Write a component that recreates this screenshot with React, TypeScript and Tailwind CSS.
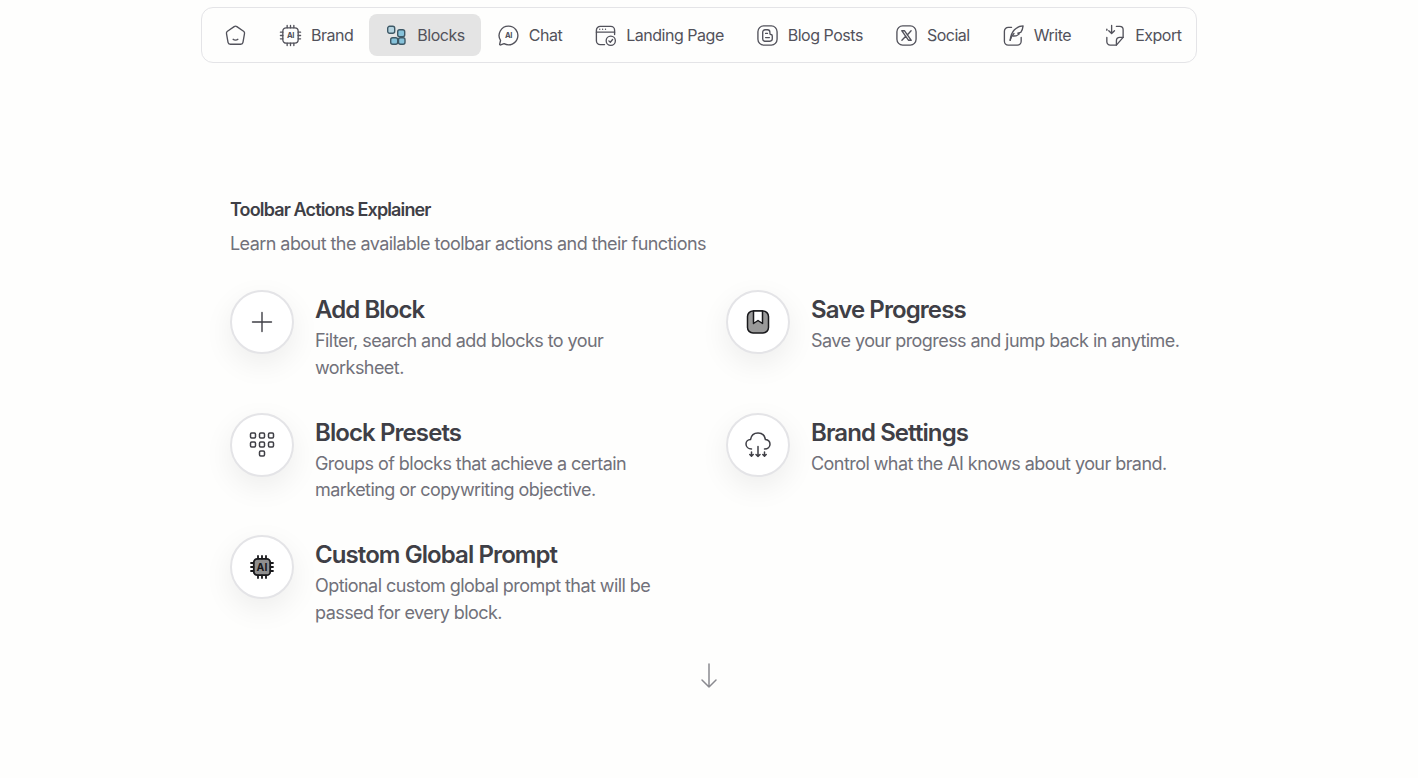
import type { ReactNode } from "react";

const stroke = "#52525b";

const NavSvg = ({ children }: { children: ReactNode }) => (
  <svg width="23" height="23" viewBox="0 0 24 24" fill="none" stroke={stroke} strokeWidth="1.400" strokeLinecap="round" strokeLinejoin="round" className="shrink-0">
    {children}
  </svg>
);

const AiText = ({ x = 12, y = 15, size = 8, fill = stroke }: { x?: number; y?: number; size?: number; fill?: string }) => (
  <text x={x} y={y} textAnchor="middle" fontSize={size} fontWeight="700" fontFamily="Inter, sans-serif" fill={fill} stroke="none">
    AI
  </text>
);

const HomeIcon = () => (
  <NavSvg>
    <path d="M10.600 2.700a2.400 2.400 0 0 1 2.800 0l7 4.900a2.400 2.400 0 0 1 1 2.500l-1.600 9a2.400 2.400 0 0 1-2.400 2H6.600a2.400 2.400 0 0 1-2.400-2L2.600 10.100a2.400 2.400 0 0 1 1-2.500z" />
    <path d="M9.500 16c1.200 1.100 3.800 1.100 5 0" />
  </NavSvg>
);

const ChipIcon = () => (
  <NavSvg>
    <rect x="4" y="4" width="16" height="16" rx="3.500" />
    <path d="M8.500 1.500V4M12 1.500V4M15.500 1.500V4M8.500 20v2.500M12 20v2.500M15.500 20v2.500M1.500 8.500H4M1.500 12H4M1.500 15.500H4M20 8.500h2.500M20 12h2.500M20 15.500h2.500" />
    <AiText x={12} y={15} size={8} />
  </NavSvg>
);

const BlocksIcon = () => (
  <svg width="23" height="23" viewBox="-1.500 -1.500 23 23" fill="#86c2da" stroke="#3d5866" strokeWidth="1.400" className="shrink-0">
    <rect x="1.200" y="0.800" width="7" height="7" rx="2" fill="#b4d3df" />
    <rect x="11.200" y="4.200" width="7" height="7" rx="2" />
    <rect x="4.200" y="12.200" width="7" height="6.500" rx="2" />
    <rect x="12" y="12.200" width="6.500" height="6.500" rx="2" />
  </svg>
);

const ChatIcon = () => (
  <NavSvg>
    <path d="M12 2.300a9.700 9.700 0 1 1-4.600 18.200L3.800 21.900c-.6.200-1.100-.300-1-.8l.9-3.900A9.700 9.700 0 0 1 12 2.300z" />
    <AiText x={12} y={15} size={8} />
  </NavSvg>
);

const LandingIcon = () => (
  <NavSvg>
    <path d="M21.500 11V6.500a4 4 0 0 0-4-4h-11a4 4 0 0 0-4 4v11a4 4 0 0 0 4 4H11" />
    <path d="M2.500 8.500h19" />
    <path d="M6 5.500h.01M9 5.500h.01M12 5.500h.01" />
    <circle cx="17.500" cy="17.500" r="4.800" />
    <path d="M15.500 17.600l1.500 1.400 2.400-2.800" />
  </NavSvg>
);

const BlogIcon = () => (
  <NavSvg>
    <rect x="2" y="2" width="20" height="20" rx="6" />
    <path d="M7 11V8.500A2.500 2.500 0 0 1 9.500 6H12a2.500 2.500 0 0 1 2.500 2.500V10a1 1 0 0 0 1 1 1.500 1.500 0 0 1 1.500 1.500v3a2.500 2.500 0 0 1-2.500 2.500h-5.500A2.500 2.500 0 0 1 7 15.500z" />
    <path d="M10 9.800h2M10 14.200h4" />
  </NavSvg>
);

const SocialIcon = () => (
  <NavSvg>
    <rect x="2" y="2" width="20" height="20" rx="6" />
    <path d="M7 7h2.800l7.200 10h-2.800zM16.800 7l-4 4.400M11.200 12.800L7.200 17" />
  </NavSvg>
);

const WriteIcon = () => (
  <NavSvg>
    <path d="M10 3.500H6.500a4 4 0 0 0-4 4V18a4 4 0 0 0 4 4H16a4 4 0 0 0 4-4v-4" />
    <path d="M8.500 17c.4-3.500 1.500-8 4.500-11 2.200-2.200 5.500-4 9-4-.3 3-1.200 5.500-2.500 6.800l-3 .7 1.500.8c-1.500 1.700-3.700 2.400-6.500 2.200" />
    <path d="M8.500 17c.8-2.800 2-5 4-7" />
  </NavSvg>
);

const ExportIcon = () => (
  <NavSvg>
    <path d="M14 2.500h3.500A3.500 3.500 0 0 1 21 6v8l-7 8H7.500A3.500 3.500 0 0 1 4 18.500V14" />
    <path d="M21 14h-3.500a3.500 3.500 0 0 0-3.500 3.500V22" />
    <path d="M9 1.500v8M6 7l3 3 3-3" />
    <path d="M4 6.500v-1" />
  </NavSvg>
);

const PlusIcon = () => (
  <svg width="24" height="24" viewBox="0 0 24 24" fill="none" stroke="#3f3f46" strokeWidth="1.400" strokeLinecap="round">
    <path d="M12 2.500v19M2.500 12h19" />
  </svg>
);

const KeypadIcon = () => (
  <svg width="26" height="26" viewBox="0 0 26 26" fill="none" stroke="#3f3f46" strokeWidth="1.500">
    {[1.500, 10.500, 19.500].flatMap((x) =>
      [1, 10].map((y) => <rect key={`${x}-${y}`} x={x} y={y} width="5" height="5" rx="1.200" />)
    )}
    <rect x="10.500" y="19" width="5" height="5" rx="1.200" />
  </svg>
);

const FilledChipIcon = () => (
  <svg width="24" height="24" viewBox="0 0 24 24" fill="none" stroke="#18181b" strokeWidth="1.800" strokeLinecap="round">
    <rect x="3.800" y="3.800" width="16.400" height="16.400" rx="3.500" fill="#8f8f8f" />
    <path d="M8 1v2.500M12 1v2.500M16 1v2.500M8 20.500V23M12 20.500V23M16 20.500V23M1 8h2.500M1 12h2.500M1 16h2.500M20.500 8H23M20.500 12H23M20.500 16H23" />
    <AiText x={12} y={15.800} size={10.500} fill="#18181b" />
  </svg>
);

const SaveIcon = () => (
  <svg width="24" height="24" viewBox="0 0 24 24" fill="none" stroke="#18181b" strokeWidth="1.500" strokeLinejoin="round">
    <rect x="1.500" y="1" width="21" height="22" rx="5.500" fill="#999999" />
    <path d="M7.500 1h9v12.500l-4.500-3-4.500 3z" fill="#ffffff" />
  </svg>
);

const CloudIcon = () => (
  <svg width="26" height="26" viewBox="0 0 26 26" fill="none" stroke="#3f3f46" strokeWidth="1.500" strokeLinecap="round" strokeLinejoin="round">
    <path d="M6.500 17C3.300 17 1 14.800 1 12C1 9.500 3 7.700 5.500 7.600C6.200 3.500 9.300 1 13 1C16.700 1 19.700 3.500 20.400 7.500C23 7.800 25 9.700 25 12.200C25 14.800 22.800 17 19.500 17" />
    <path d="M13 14.500V24.500M11 22.500l2 2 2-2" />
    <path d="M6.500 20v4M4.800 22.500l1.700 1.700 1.700-1.700M19.500 20v4M17.800 22.500l1.700 1.700 1.700-1.700" />
  </svg>
);

const navItems = [
  { label: "Brand", icon: <ChipIcon /> },
  { label: "Blocks", icon: <BlocksIcon />, active: true },
  { label: "Chat", icon: <ChatIcon /> },
  { label: "Landing Page", icon: <LandingIcon /> },
  { label: "Blog Posts", icon: <BlogIcon /> },
  { label: "Social", icon: <SocialIcon /> },
  { label: "Write", icon: <WriteIcon /> },
  { label: "Export", icon: <ExportIcon /> },
];

const actions = [
  { title: "Add Block", text: "Filter, search and add blocks to your worksheet.", icon: <PlusIcon /> },
  { title: "Save Progress", text: "Save your progress and jump back in anytime.", icon: <SaveIcon /> },
  { title: "Block Presets", text: "Groups of blocks that achieve a certain marketing or copywriting objective.", icon: <KeypadIcon /> },
  { title: "Brand Settings", text: "Control what the AI knows about your brand.", icon: <CloudIcon /> },
  { title: "Custom Global Prompt", text: "Optional custom global prompt that will be passed for every block.", icon: <FilledChipIcon /> },
];

export default function App() {
  return (
    <div className="min-h-screen overflow-hidden bg-[#fefefd] font-['Inter',sans-serif]">
      <div className="ml-[201px] w-[996px] pt-[7px]">
        <nav className="flex h-14 items-center rounded-xl border border-[#e4e4e7] pl-[6px]">
          <button className="flex h-[42px] items-center rounded-lg px-4">
            <HomeIcon />
          </button>
          {navItems.map((item) => (
            <button
              key={item.label}
              className={`flex h-[42px] items-center gap-[9px] whitespace-nowrap rounded-lg px-4 text-base tracking-[-0.03em] text-[#52525b] ${item.active ? "bg-[#e4e4e4]" : ""}`}
            >
              {item.icon}
              {item.label}
            </button>
          ))}
        </nav>

        <main className="pl-[29px] pt-[133px]">
          <h1 className="text-lg leading-7 font-semibold tracking-[-0.048em] text-[#3f3f46]">Toolbar Actions Explainer</h1>
          <p className="mt-[6px] text-lg leading-7 tracking-[-0.031em] text-[#71717a]">
            Learn about the available toolbar actions and their functions
          </p>

          <div className="mt-[32px] grid w-[992px] grid-cols-2 gap-y-[15.500px]">
            {actions.map((a) => (
              <div key={a.title} className="flex min-h-[107px] items-start gap-[21px]">
                <div className="flex h-16 w-16 shrink-0 items-center justify-center rounded-full border-2 border-[#e4e4e7] bg-white shadow-[0_10px_30px_rgba(0,0,0,0.07)]">
                  {a.icon}
                </div>
                <div className="w-[375px] pt-[2px]">
                  <h2 className="text-2xl leading-9 font-semibold tracking-[-0.038em] text-[#3f3f46]">{a.title}</h2>
                  <p className="text-lg leading-[26.500px] tracking-[-0.031em] text-[#71717a]">{a.text}</p>
                </div>
              </div>
            ))}
          </div>
        </main>
      </div>

      <div className="mt-[21px] flex justify-center">
        <svg width="18" height="26" viewBox="0 0 18 26" fill="none" stroke="#8a8a90" strokeWidth="1.500" strokeLinecap="round" strokeLinejoin="round">
          <path d="M9 1v23M2 17l7 7 7-7" />
        </svg>
      </div>
    </div>
  );
}
